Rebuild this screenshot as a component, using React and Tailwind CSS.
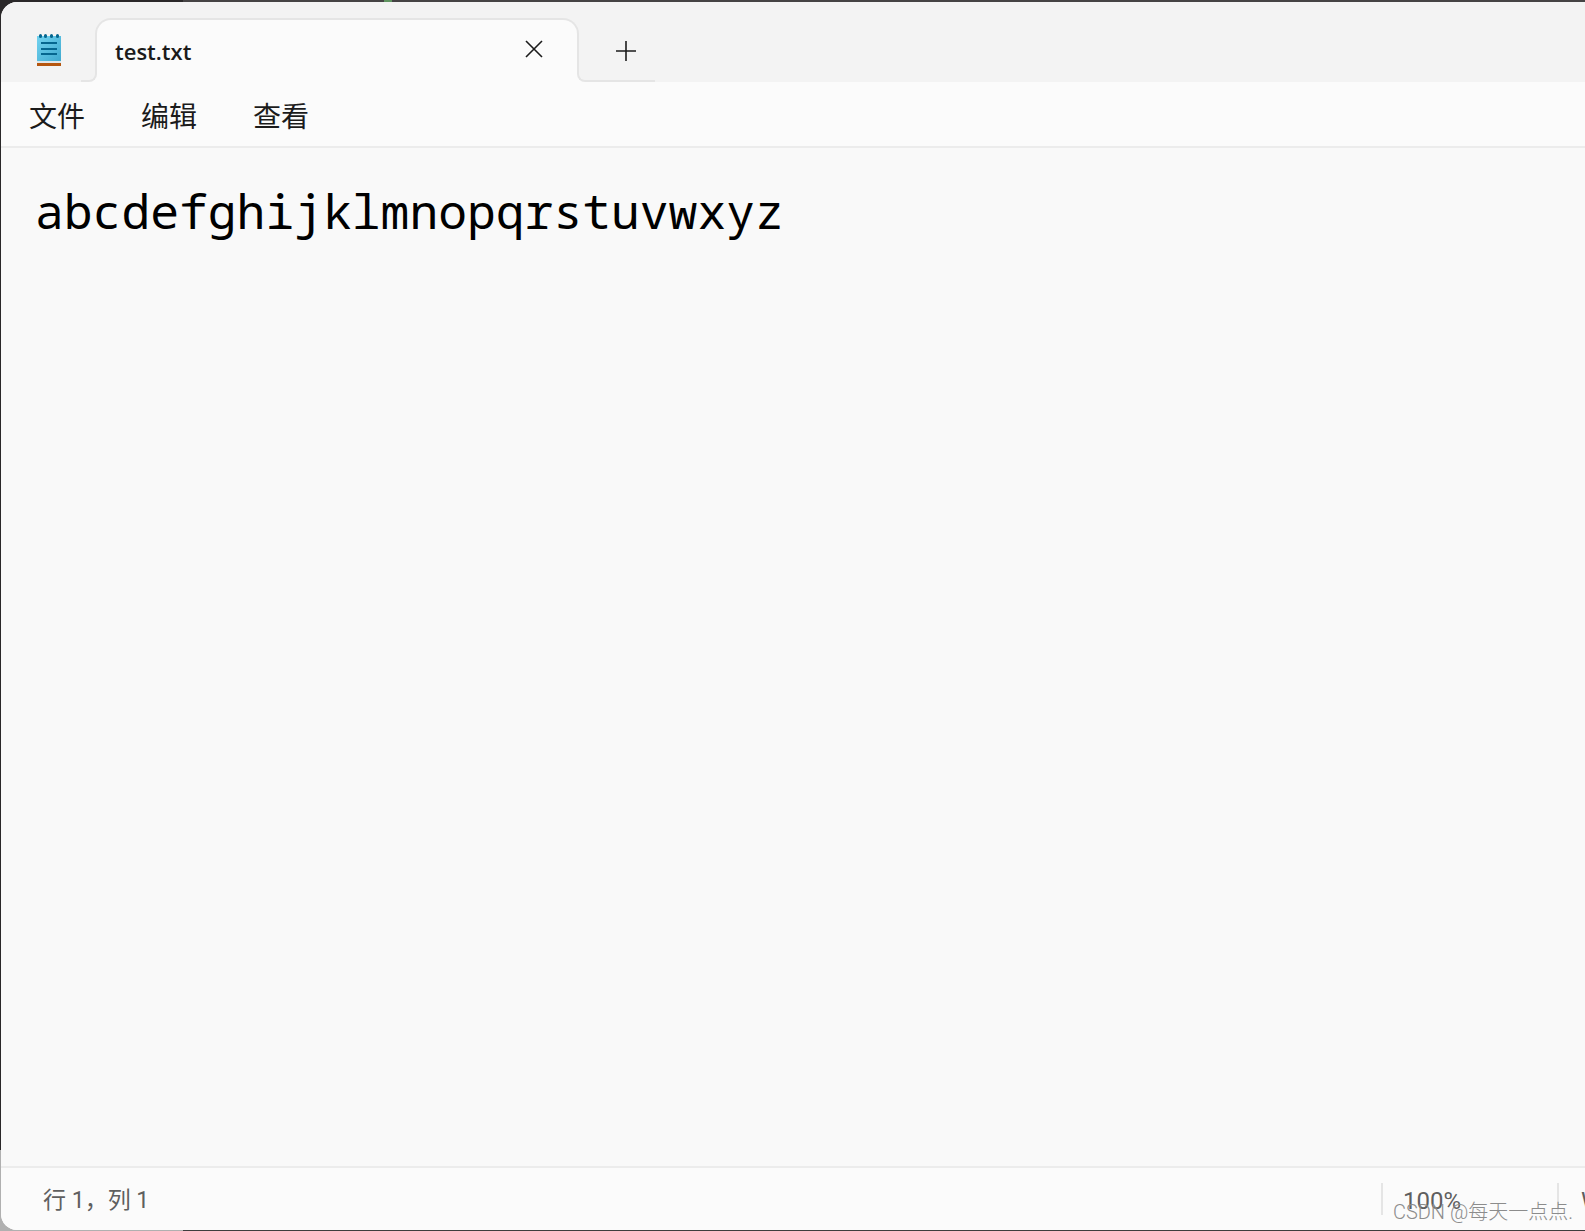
import React, { useState } from 'react';

const MENUS = ['文件', '编辑', '查看'];

const NotepadIcon = () => (
  <svg width="24" height="32" viewBox="0 0 24 32" aria-hidden="true">
    <defs>
      <linearGradient id="page" x1="0" y1="0" x2="1" y2="1">
        <stop offset="0" stopColor="#73d3f0" />
        <stop offset="1" stopColor="#3fa9cf" />
      </linearGradient>
    </defs>
    <rect x="0" y="29" width="24" height="3" fill="#b5560f" />
    <rect x="0" y="27" width="24" height="2" fill="#dfe6ea" />
    <rect x="0" y="2" width="24" height="25" fill="url(#page)" />
    <path d="M4 9h16M4 15h16M4 20h16" stroke="#05668f" strokeWidth="2" />
    <path d="M3.5 1.5v1M8.5 1.5v1M14.5 1.5v1M20.5 1.5v1" stroke="#05668f" strokeWidth="3" strokeLinecap="round" />
  </svg>
);

const CloseIcon = () => (
  <svg width="18" height="18" viewBox="0 0 18 18" fill="none" stroke="currentColor" strokeWidth="1.6" aria-hidden="true">
    <path d="M1 1l16 16M17 1L1 17" />
  </svg>
);

const PlusIcon = () => (
  <svg width="20" height="20" viewBox="0 0 20 20" fill="none" stroke="currentColor" strokeWidth="1.6" aria-hidden="true">
    <path d="M10 0v20M0 10h20" />
  </svg>
);

const TabBar = () => (
  <header className="flex h-20 items-end bg-[#f3f3f3]">
    <div className="flex w-20 self-stretch pt-8 pl-9">
      <NotepadIcon />
    </div>
    <div className="z-10 -mr-0.5 bg-[#fbfbfb]">
      <div className="h-5 w-4 rounded-br-lg border-r-2 border-b-2 border-[#e5e5e5] bg-[#f3f3f3]" />
    </div>
    <div className="flex h-16 w-[484px] items-start justify-between rounded-t-2xl border-2 border-b-0 border-[#e5e5e5] bg-[#fbfbfb] pt-4 pr-8 pl-[18px]">
      <span className="font-['Open_Sans','Noto_Sans',sans-serif] text-[22px] leading-[30px] font-semibold">test.txt</span>
      <button type="button" aria-label="Close tab" className="p-1 pr-0.5">
        <CloseIcon />
      </button>
    </div>
    <div className="-ml-0.5 bg-[#fbfbfb]">
      <div className="flex h-11 w-[78px] items-start rounded-bl-lg border-b-2 border-l-2 border-[#e5e5e5] bg-[#f3f3f3] pt-[3px] pl-[37px]">
        <button type="button" aria-label="New tab">
          <PlusIcon />
        </button>
      </div>
    </div>
  </header>
);

const MenuBar = () => (
  <nav className="flex h-[66px] items-center gap-14 border-b-2 border-[#ececec] bg-[#fbfbfb] px-7 pt-2">
    {MENUS.map(name => (
      <button key={name} type="button" className="text-[28px] leading-none">
        {name}
      </button>
    ))}
  </nav>
);

const StatusBar = () => (
  <footer className="flex h-16 items-center justify-between overflow-hidden border-t-2 border-[#ececec] bg-[#fbfbfb] pl-[42px] whitespace-nowrap text-[#5f5f5f]">
    <span className="pt-1 text-[23px]">行 1，列 1</span>
    <div className="flex w-[204px] shrink-0 items-center text-2xl">
      <div className="flex h-8 w-44 shrink-0 items-center border-l-2 border-[#e5e5e5] pt-1 pl-5">100%</div>
      <div className="flex h-8 shrink-0 items-center border-l-2 border-[#e5e5e5] pt-1 pl-[22px]">Windows (CRLF)</div>
    </div>
  </footer>
);

const App = () => {
  const [text, setText] = useState('abcdefghijklmnopqrstuvwxyz');

  return (
    <div className="flex min-h-screen flex-col bg-[#3f3d3e] bg-[linear-gradient(to_right,#b0b0b0_183px,#3f3d3e_183px),linear-gradient(to_bottom,#2a2829_93.4%,#b0b0b0_93.4%),linear-gradient(to_right,#2a2829_183px,#454344_183px,#454344_384px,#5f9460_384px,#5f9460_392px,#454344_392px)] bg-[length:100%_16px,16px_100%,100%_16px] bg-[position:left_bottom,left_top,left_top] bg-no-repeat pt-0.5 pb-px pl-px font-['Roboto','Noto_Sans_CJK_SC',sans-serif] text-[#1b1b1b]">
      <div className="relative flex grow flex-col overflow-hidden rounded-l-2xl bg-[#f9f9f9]">
        <TabBar />
        <MenuBar />
        <textarea
          aria-label="Text editor"
          spellCheck={false}
          value={text}
          onChange={(e) => setText(e.target.value)}
          className="w-full grow resize-none bg-transparent px-[34px] py-8 font-['Noto_Sans_Mono','DejaVu_Sans_Mono',monospace] text-5xl leading-[62px] text-black outline-none"
        />
        <StatusBar />
        <span className="pointer-events-none absolute right-3 bottom-1 text-xl font-light text-[#8c8c8c]">
          CSDN @每天一点点.
        </span>
      </div>
    </div>
  );
};

export default App;
